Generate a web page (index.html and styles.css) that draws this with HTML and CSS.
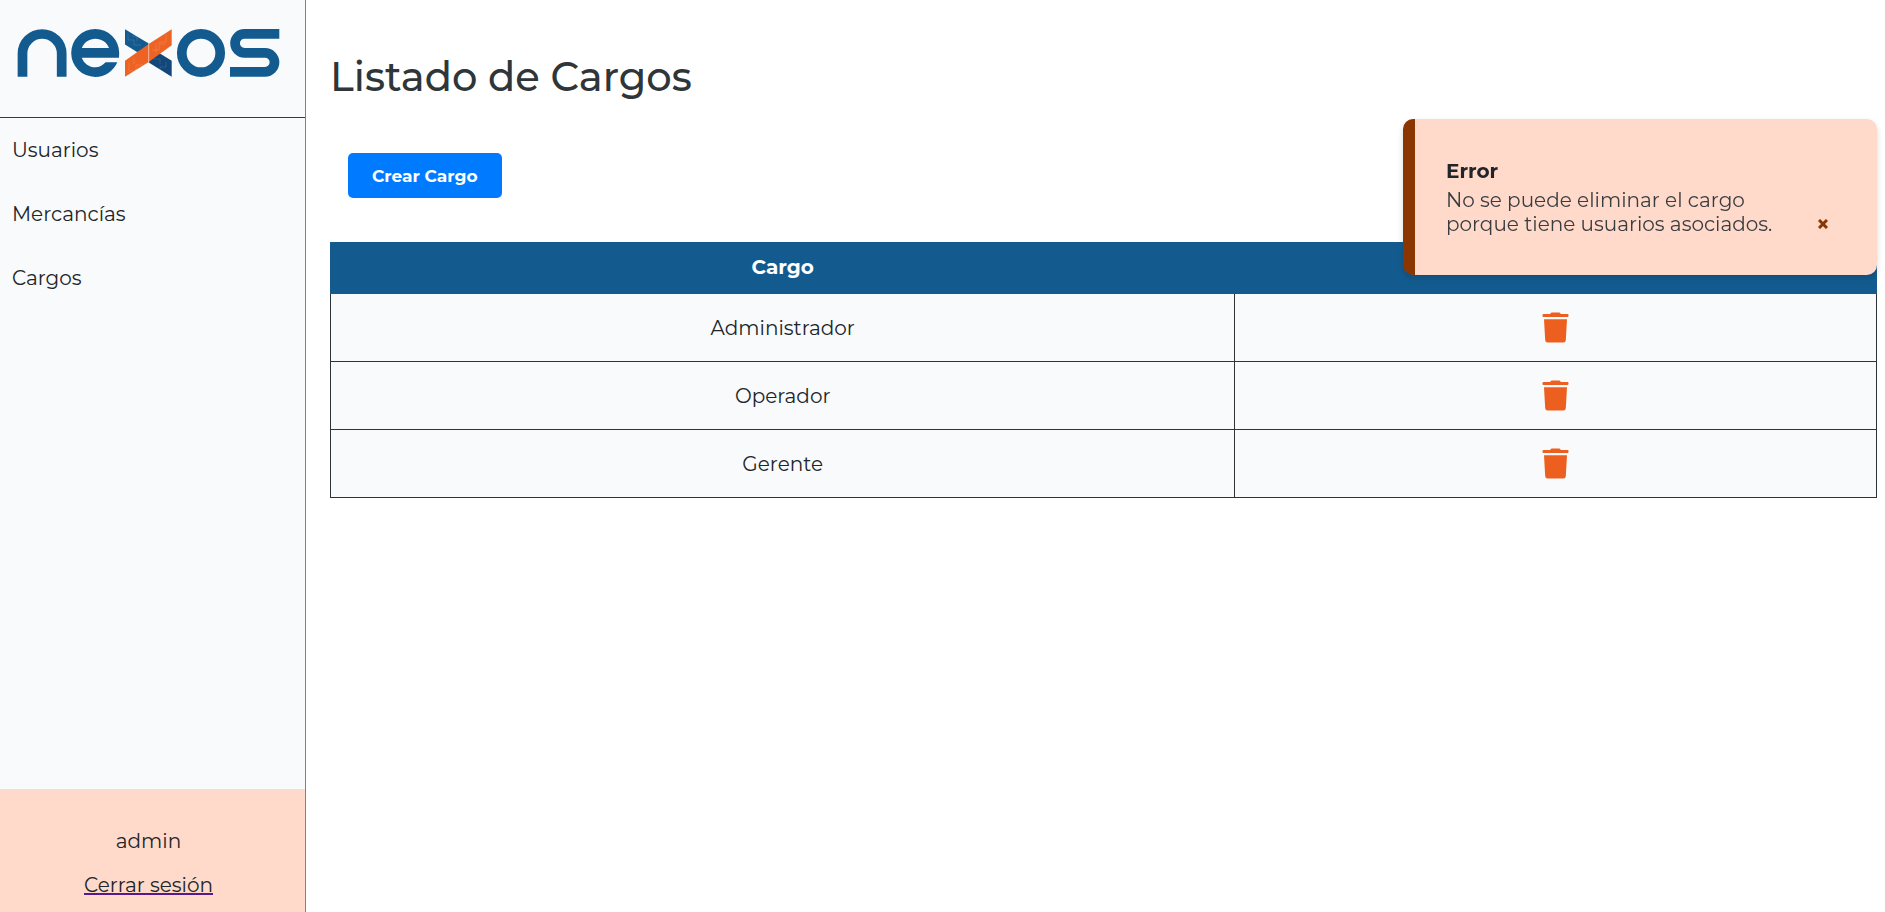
FILE: index.html
```html
<!DOCTYPE html>
<html lang="es">
<head>
  <meta charset="utf-8">
  <meta name="viewport" content="width=device-width, initial-scale=1">
  <title>Listado de Cargos</title>
  <link rel="stylesheet" href="styles.css">
</head>
<body>
  <svg class="sprite" aria-hidden="true">
    <symbol id="trash" viewBox="0 0 27 31">
      <path d="M9.5 .5h8l1.5 1.500h6.500a1 1 0 0 1 1 1v1a1 1 0 0 1-1 1h-24a1 1 0 0 1-1-1v-1a1 1 0 0 1 1-1h6.500zM2 7.200h23l-1.200 21a2.500 2.500 0 0 1-2.500 2.300h-15.600a2.500 2.500 0 0 1-2.500-2.300z"/>
    </symbol>
  </svg>
  <div class="layout">
    <aside class="sidebar">
      <div class="brand">
        <svg class="logo" viewBox="17 29 263 48" role="img" aria-label="nexos">
          <g fill="none" stroke="#135b8f" stroke-width="9.700">
            <path d="M22.500 76.700V53.600a19.600 19.600 0 0 1 39.200 0v23.100"/>
            <circle cx="201" cy="53" r="19.200"/>
            <path d="M279.300 33.900H244.500a9.400 9.400 0 0 0 0 18.900H265a9.500 9.500 0 0 1 0 19H230"/>
          </g>
          <path fill="#135b8f" fill-rule="evenodd" d="M119 57.700H81.800c2 5.800 7.500 9.600 13.500 9.600 4 0 7.500-2 10.300-5H117.300A24 24 0 0 1 95.200 76.900 24 24 0 0 1 71.200 53 24 24 0 0 1 95.200 29 24 24 0 0 1 119.200 53zM81.800 48H109c-2-5.500-7.500-9.200-13.600-9.200S84 42.500 81.800 48z"/>
          <path fill="#155a8f" d="M125 29.300l23.700 14.200v6L137 52 125 44.500z"/>
          <path fill="#124779" d="M171.700 76.700l-23-14.200v-7L160 53.500l11.700 7.200z"/>
          <path fill="#ee6324" d="M125 60.700l23.700-16.700 23-14.700v16l-23 16.700L125 76.700z"/>
          <path fill="none" stroke="#fff" stroke-opacity=".2" stroke-width=".6" d="M128 33v7h6v5h7M132 36h5v5M166 62v5h-6v5M153 59h7v5M129 63v8h7v-6h7M152 50h7v-8h7v-8M134 58v6M156 43v10M165 44h-5"/>
          <path stroke="#f3c4ac" stroke-width=".9" d="M148.700 43.500v19"/>
        </svg>
      </div>
      <nav class="menu">
        <a href="#usuarios">Usuarios</a>
        <a href="#mercancias">Mercancías</a>
        <a href="#cargos">Cargos</a>
      </nav>
      <div class="session">
        <span>admin</span>
        <a href="#salir">Cerrar sesión</a>
      </div>
    </aside>
    <main class="content">
      <h1>Listado de Cargos</h1>
      <button class="create" type="button">Crear Cargo</button>
      <table class="roles">
        <colgroup><col class="col-name"><col></colgroup>
        <thead>
          <tr><th scope="col">Cargo</th><td></td></tr>
        </thead>
        <tbody>
          <tr><td>Administrador</td><td><button class="delete" type="button" aria-label="Eliminar Administrador"><svg><use href="#trash"/></svg></button></td></tr>
          <tr><td>Operador</td><td><button class="delete" type="button" aria-label="Eliminar Operador"><svg><use href="#trash"/></svg></button></td></tr>
          <tr><td>Gerente</td><td><button class="delete" type="button" aria-label="Eliminar Gerente"><svg><use href="#trash"/></svg></button></td></tr>
        </tbody>
      </table>
    </main>
  </div>
  <div class="toast" role="alert">
    <div class="toast-text">
      <strong>Error</strong>
      <p>No se puede eliminar el cargo porque tiene usuarios asociados.</p>
    </div>
    <button class="close" type="button" aria-label="Cerrar">
      <svg viewBox="0 0 10 10"><path d="M1 1l8 8M9 1l-8 8"/></svg>
    </button>
  </div>
</body>
</html>
```

FILE: styles.css
```css
* {
  box-sizing: border-box;
}

body {
  margin: 0;
  background: #fff;
  color: #212529;
  font: 400 20px/24px Montserrat, Inter, "Open Sans", sans-serif;
}

button {
  font: inherit;
  border: 0;
  cursor: pointer;
}

.sprite {
  display: none;
}

.layout {
  display: flex;
  min-height: 100vh;
}

.sidebar {
  display: flex;
  flex-direction: column;
  flex: 0 0 306px;
  background: #f8fafc;
  border-right: 1px solid #ed5f1e;
}

.brand {
  padding: 29px 25px 40px 17px;
  border-bottom: 1px solid #2e3b4e;
}

.logo {
  display: block;
  width: 100%;
  height: 48px;
  overflow: visible;
}

.menu {
  display: flex;
  flex-direction: column;
  flex: 1;
}

.menu a {
  padding: 20px 12px;
  color: inherit;
  text-decoration: none;
}

.session {
  display: flex;
  flex-direction: column;
  align-items: center;
  gap: 20px;
  padding: 40px 8px 15px 0;
  background: #ffdacb;
}

.session a {
  color: inherit;
  text-decoration-color: #551a8b;
}

.content {
  flex: 1;
  padding: 53px 8px 40px 24px;
}

h1 {
  margin: 0 0 52px;
  color: #2f363a;
  font-size: 40px;
  font-weight: 500;
  line-height: 48px;
}

.create {
  display: block;
  margin: 0 0 44px 18px;
  padding: 11px 24px 9px;
  border-radius: 5px;
  background: #007bff;
  color: #fff;
  font-size: 17px;
  font-weight: 700;
  line-height: 25px;
}

.roles {
  width: 100%;
  table-layout: fixed;
  border-collapse: collapse;
  text-align: center;
}

.col-name {
  width: 58.5%;
}

.roles thead {
  background: #135b8f;
  color: #fff;
}

.roles thead th,
.roles thead td {
  height: 51px;
  padding: 0 0 2px;
  border: 1px solid #135b8f;
  font-weight: 700;
}

.roles tbody td {
  height: 68px;
  padding: 0;
  background: #f8fafc;
  border: 1px solid #2f3337;
}

.roles tbody tr:first-child td {
  border-top: 0;
}

.delete {
  display: block;
  margin: 0 auto;
  padding: 0;
  background: none;
}

.delete svg {
  display: block;
  width: 27px;
  height: 31px;
  fill: #ed5f1e;
}

.toast {
  position: fixed;
  top: 119px;
  right: 8px;
  display: flex;
  align-items: flex-end;
  justify-content: space-between;
  width: 474px;
  margin: 0;
  padding: 40px 48px 39px 31px;
  border-left: 12px solid #8b3500;
  border-radius: 10px;
  background: #ffdacb;
  box-shadow: 0 3px 6px rgba(0, 0, 0, 0.15);
}

.toast-text {
  flex: 0 1 336px;
}

.toast strong {
  display: block;
  margin-bottom: 5px;
}

.toast p {
  margin: 0;
  color: #3a3d40;
}

.close {
  padding: 7px 1px;
  background: none;
}

.close svg {
  display: block;
  width: 10px;
  height: 10px;
  fill: none;
  stroke: #8b3500;
  stroke-width: 3;
}
```
